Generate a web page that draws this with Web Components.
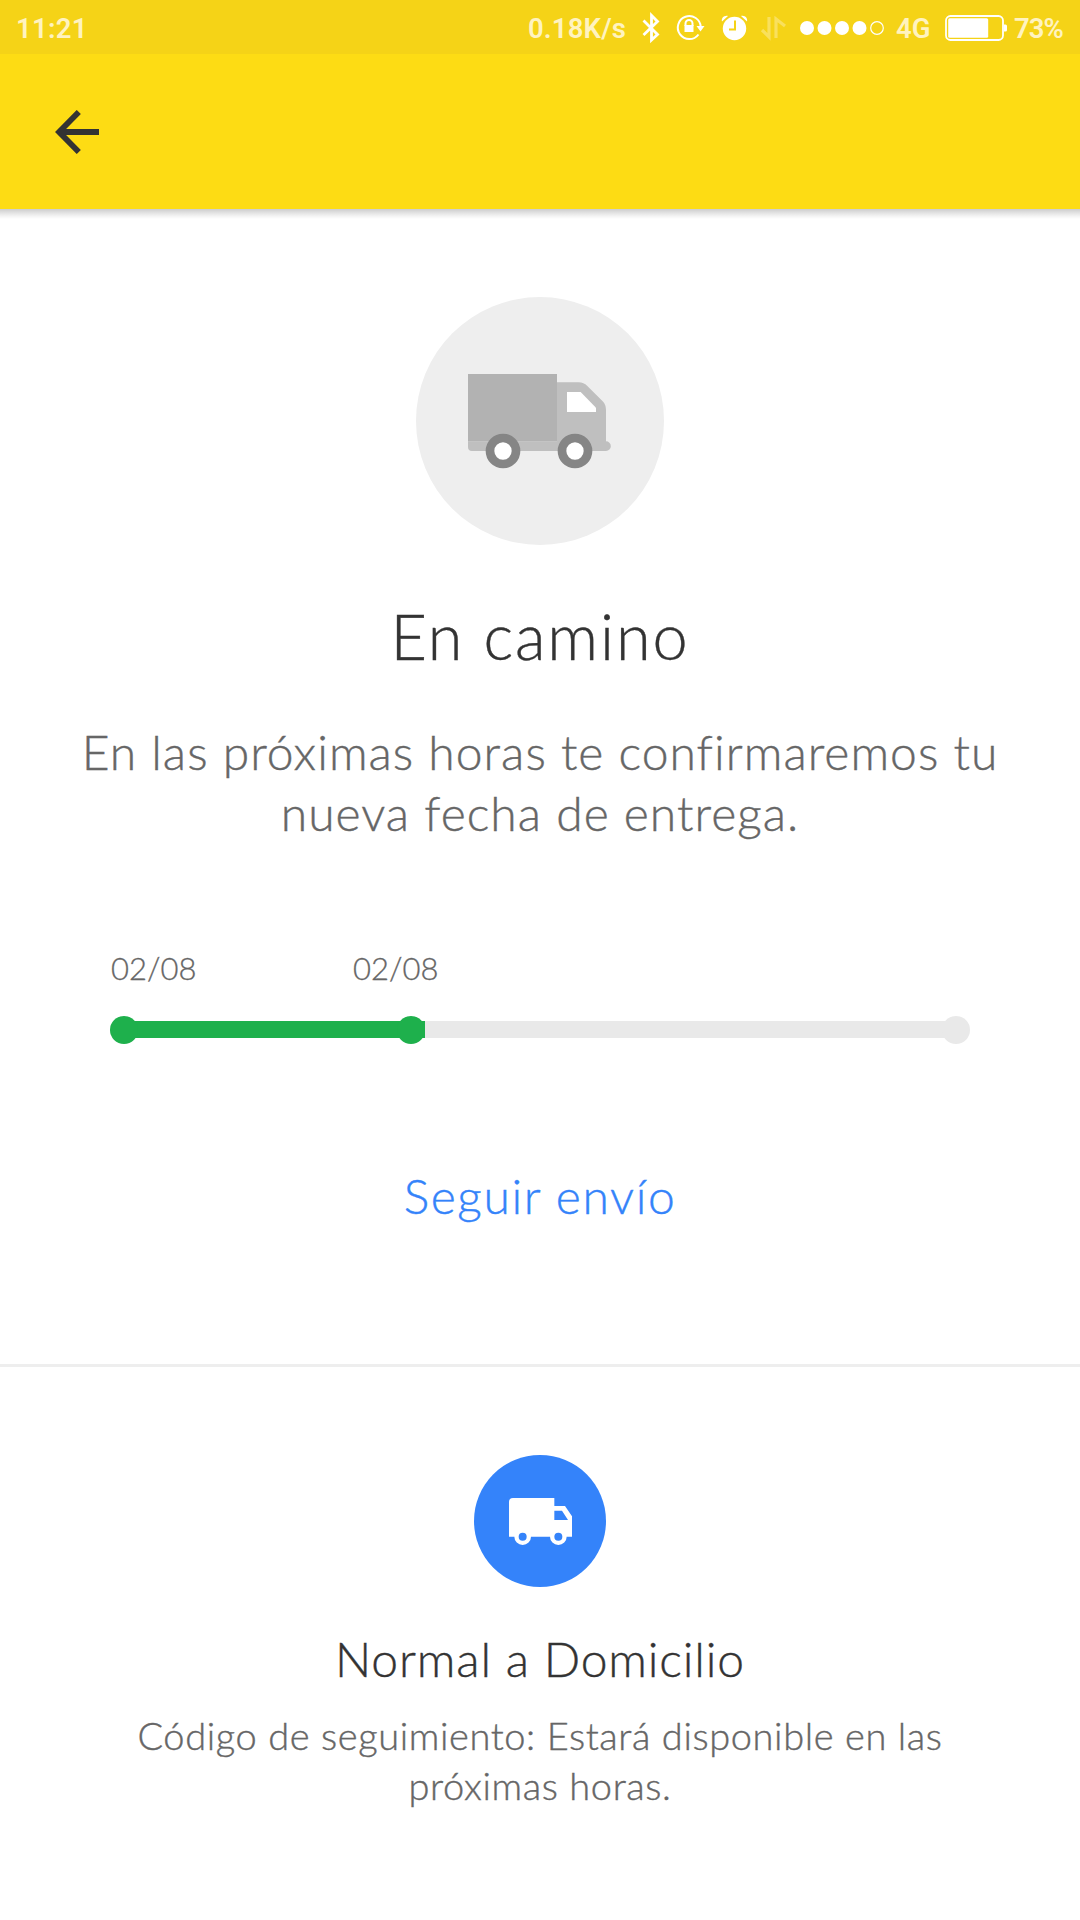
<!DOCTYPE html>
<html lang="es">
<head>
<meta charset="utf-8">
<title>Seguimiento de envío</title>
<style>
    body {
        margin: 0;
        background: #fff;
        font-family: Lato, "Open Sans", sans-serif;
        font-weight: 300;
    }
</style>
</head>
<body>
<shipping-screen></shipping-screen>

<script>
class StatusBar extends HTMLElement {
    constructor() {
        super();
        this.attachShadow({ mode: 'open' });
        this.shadowRoot.innerHTML = `
            <style>
                :host {
                    display: flex;
                    align-items: center;
                    box-sizing: border-box;
                    height: 54px;
                    padding: 2px 16px 0;
                    background: #f5d317;
                    color: #fff3c0;
                    font: 600 27.5px/52px Roboto, sans-serif;
                    white-space: nowrap;
                }
                svg { display: block; flex: none; }
                span { padding-top: 1px; }
                .time { flex: 1; letter-spacing: 0.3px; }
                .speed { width: 100px; letter-spacing: 0.15px; }
                .net { width: 36px; margin-left: 12px; }
                .battery { margin-left: 13px; }
                .pct { width: 50px; margin-left: 7px; letter-spacing: -0.9px; }
            </style>
            <span class="time">11:21</span>
            <span class="speed">0.18K/s</span>
            <svg width="256" height="52" viewBox="628 2 256 52" fill="#fff">
                <path d="M643.500 20.500l14 14-6 5.500V15.500l6 6-14 13.500" fill="none" stroke="#fff" stroke-width="2.800"/>
                <g fill="none" stroke="#fff" stroke-width="2">
                    <path d="M698.500 34.500a11.500 11.500 0 1 1 2.300-7.500"/>
                    <path d="M685.500 26v-2.500a3.500 3.500 0 0 1 7 0V26"/>
                </g>
                <path d="M684.500 25h9v7h-9zM696.500 26h8l-4 5.500z"/>
                <circle cx="734.500" cy="28.500" r="11.700"/>
                <path d="M722 21.500c-1-3 2-6.500 6-5.500zM747 21.500c1-3-2-6.500-6-5.500z"/>
                <path d="M735 20.500v9h-6" fill="none" stroke="#f5d317" stroke-width="2"/>
                <path d="M762 30l7 7V17M776 38V19l9 7" fill="none" stroke="#f9e05d" stroke-width="3.200"/>
                <circle cx="807" cy="28" r="7"/>
                <circle cx="824.500" cy="28" r="7"/>
                <circle cx="842" cy="28" r="7"/>
                <circle cx="859.500" cy="28" r="7"/>
                <circle cx="877" cy="28" r="6.300" fill="none" stroke="#fff" stroke-width="1.200"/>
            </svg>
            <span class="net">4G</span>
            <svg class="battery" width="62" height="28" viewBox="0 0 62 28">
                <rect x="1" y="2" width="57" height="24" rx="4.500" fill="none" stroke="#fff" stroke-width="1.800"/>
                <rect x="3.200" y="4.200" width="40" height="19.600" rx="1.500" fill="#fff"/>
                <path d="M59 10.500h1.500q1.500 0 1.500 1.500v4q0 1.500-1.500 1.500H59z" fill="#fff"/>
            </svg>
            <span class="pct">73%</span>
        `;
    }
}

class AppBar extends HTMLElement {
    constructor() {
        super();
        this.attachShadow({ mode: 'open' });
        this.shadowRoot.innerHTML = `
            <style>
                :host {
                    display: flex;
                    align-items: center;
                    height: 155px;
                    padding-left: 55px;
                    background: #fddc14;
                }
                svg { display: block; }
            </style>
            <svg width="44" height="44" viewBox="0 0 44 44" fill="none" stroke="#333" stroke-width="5.800">
                <path d="M23.800 2L4.100 22l19.700 20M5 22h39"/>
            </svg>
        `;
    }
}

class RoundIcon extends HTMLElement {
    constructor() {
        super();
        this.attachShadow({ mode: 'open' });
        this.shadowRoot.innerHTML = `
            <style>
                :host {
                    display: block;
                    width: var(--size);
                    height: var(--size);
                    border-radius: 50%;
                    background: var(--fill);
                }
                ::slotted(svg) { display: block; width: 100%; height: 100%; }
            </style>
            <slot></slot>
        `;
    }
}

class ShipmentProgress extends HTMLElement {
    constructor() {
        super();
        this.attachShadow({ mode: 'open' });
        this.shadowRoot.innerHTML = `
            <style>
                :host { display: block; width: 860px; }
                .dates {
                    display: grid;
                    grid-template-columns: 242px 1fr;
                    padding-left: 1px;
                    color: #666;
                    font-size: 31px;
                    line-height: 37px;
                    -webkit-text-stroke: 0.3px;
                }
                .track {
                    display: flex;
                    align-items: center;
                    justify-content: space-between;
                    height: 28px;
                    margin-top: 29px;
                    background:
                        linear-gradient(#1eb04c, #1eb04c) 14px 5px / 301px 17px no-repeat,
                        linear-gradient(#e9e9e9, #e9e9e9) 14px 5px / 832px 17px no-repeat;
                }
                i { width: 28px; height: 28px; border-radius: 50%; background: #1eb04c; }
                i:nth-child(2) { margin-right: 258px; }
                i:last-child { background: #e9e9e9; }
            </style>
            <div class="dates"><slot></slot></div>
            <div class="track"><i></i><i></i><i></i></div>
        `;
    }
}

class ShippingScreen extends HTMLElement {
    constructor() {
        super();
        this.attachShadow({ mode: 'open' });
        this.shadowRoot.innerHTML = `
            <style>
                :host { display: block; height: 1920px; overflow: hidden; background: #fff; }
                section { display: flex; flex-direction: column; align-items: center; text-align: center; }
                .state {
                    height: 1067px;
                    padding-top: 88px;
                    border-bottom: 3px solid #eee;
                    /* toolbar shadow */
                    background: linear-gradient(#ccc, #dedede 3px, #f3f3f3 7px, #fff 10px) top / 100% 10px no-repeat;
                }
                .method { padding-top: 88px; }
                h1, h2, p, a { margin: 0; font-weight: 300; white-space: nowrap; -webkit-text-stroke: 0.4px; }
                h1 { margin-top: 54px; color: #333; font-size: 63px; line-height: 74px; letter-spacing: 1.9px; }
                .message { margin-top: 48px; color: #666; font-size: 48px; line-height: 61px; letter-spacing: 1.04px; }
                shipment-progress { margin-top: 107px; text-align: left; }
                a { margin-top: 121px; color: #3483fa; font-size: 48px; line-height: 61px; letter-spacing: 1.6px; text-decoration: none; }
                h2 { margin-top: 44px; color: #333; font-size: 48px; line-height: 56px; letter-spacing: 0.85px; }
                .code { margin-top: 23px; color: #666; font-size: 38px; line-height: 50.400px; letter-spacing: 0.6px; }
                .big { --size: 248px; --fill: #eee; }
                .small { --size: 132px; --fill: #3483fa; }
            </style>
            <status-bar></status-bar>
            <app-bar></app-bar>
            <section class="state">
                <round-icon class="big">
                    <svg viewBox="0 0 744 744">
                        <path fill="#bfbfbf" d="M423 256h65q15 0 26 11l46 46q10 10 10 26v94a14.500 14.500 0 0 1 0 29H168q-12 0-12-12v-17h267z"/>
                        <path fill="#b2b2b2" d="M156 231h267v202H156z"/>
                        <path fill="#fff" d="M453 285h41l46 47v13h-87z"/>
                        <g fill="#fff" stroke="#858585" stroke-width="26">
                            <circle cx="261" cy="462" r="39"/>
                            <circle cx="477" cy="462" r="39"/>
                        </g>
                    </svg>
                </round-icon>
                <h1>En camino</h1>
                <p class="message">En las próximas horas te confirmaremos tu<br>nueva fecha de entrega.</p>
                <shipment-progress><span>02/08</span><span>02/08</span></shipment-progress>
                <a>Seguir envío</a>
            </section>
            <section class="method">
                <round-icon class="small">
                    <svg viewBox="0 0 396 396">
                        <path fill="#fff" fill-rule="evenodd" d="M117 129h124v24h32l21 31v61H105V141q0-12 12-12zM241 167v28h41l-18-28z"/>
                        <g fill="#3483fa" stroke="#fff" stroke-width="13">
                            <circle cx="146" cy="245" r="18.500"/>
                            <circle cx="253" cy="245" r="18.500"/>
                        </g>
                    </svg>
                </round-icon>
                <h2>Normal a Domicilio</h2>
                <p class="code">Código de seguimiento: Estará disponible en las<br>próximas horas.</p>
            </section>
        `;
    }
}

customElements.define('status-bar', StatusBar);
customElements.define('app-bar', AppBar);
customElements.define('round-icon', RoundIcon);
customElements.define('shipment-progress', ShipmentProgress);
customElements.define('shipping-screen', ShippingScreen);
</script>
</body>
</html>
